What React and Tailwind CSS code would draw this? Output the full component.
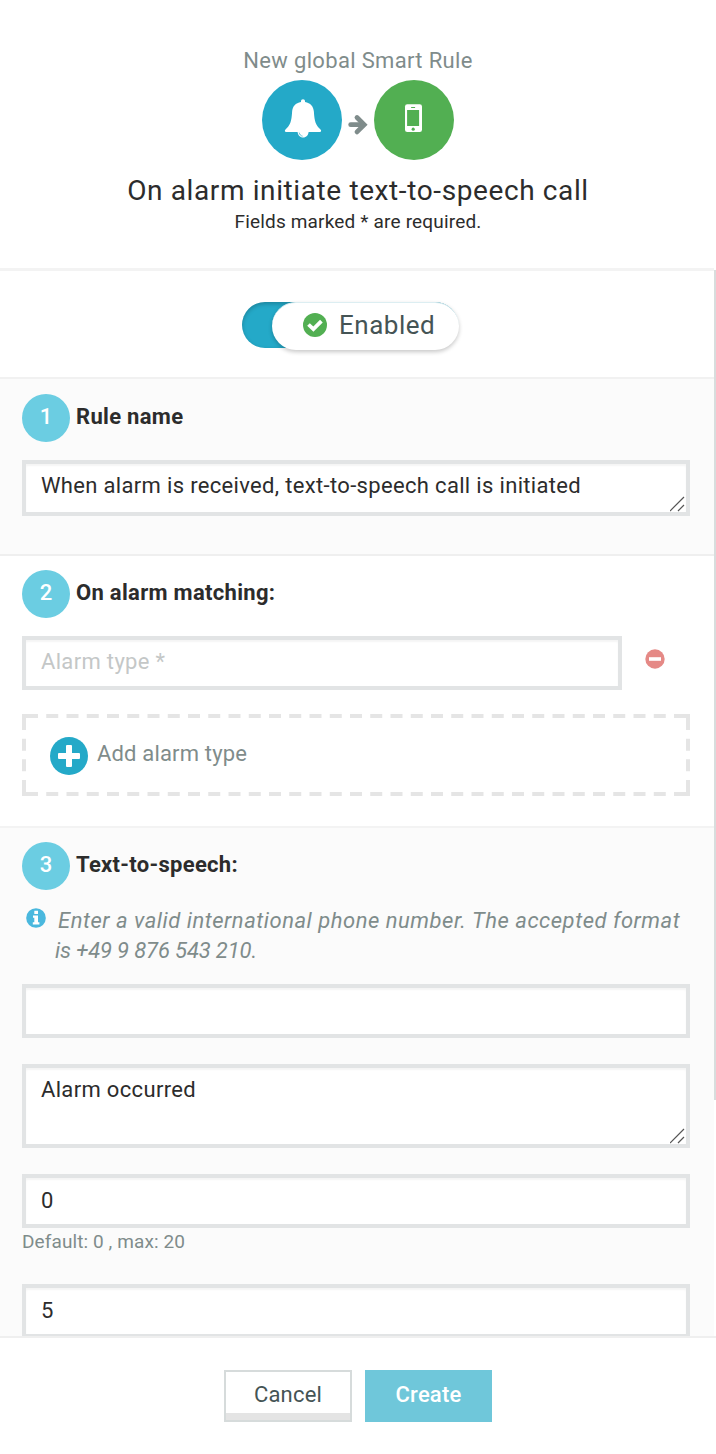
const FIELD =
  "block w-full rounded-none border-4 border-[#e2e4e5] bg-white pl-[15px] pr-4 text-[22px] leading-[30px] tracking-[0.33px] text-[#2c2c2c] shadow-[inset_0_2px_2px_rgba(0,0,0,0.045)] outline-none placeholder:text-[#c4c7c7]";

function Bell() {
  return (
    <svg viewBox="0 0 80 80" className="size-20 rounded-full bg-[#24a9c8]">
      <path
        fill="#fff"
        d="M41 19.200c1.200 0 2 .8 2 1.900v.8c5.400 1 8.600 4.400 8.900 9.900.5 9.600 2 13.700 6.400 17.400 1.400 1.200 1 2.900-.6 2.900H24.300c-1.600 0-2-1.700-.6-2.900 4.400-3.700 5.900-7.800 6.400-17.400.3-5.500 3.500-8.900 8.900-9.900v-.8c0-1.100.8-1.900 2-1.900Z"
      />
      <path d="M35.600 51.500h11c0 3.400-2.300 6-5.500 6s-5.500-2.600-5.500-6Z" fill="#fff" />
      <path d="M37.200 52.600c.3 1.800 1.500 3.200 3.400 3.600" fill="none" stroke="#24a9c8" strokeWidth="0.700" />
    </svg>
  );
}

function Phone() {
  return (
    <svg viewBox="0 0 80 80" className="size-20 rounded-full bg-[#52af52]">
      <rect x="31" y="24.300" width="17" height="27.700" rx="2.300" fill="#fff" />
      <rect x="33.100" y="30" width="12" height="16" fill="#52af52" />
      <rect x="37" y="27" width="4.200" height="1" rx="0.500" fill="#52af52" />
      <circle cx="39.200" cy="49.200" r="1.600" fill="#52af52" />
    </svg>
  );
}

function Arrow() {
  return (
    <svg viewBox="0 0 32 80" className="h-20 w-8" fill="none" stroke="#7f8c8b" strokeWidth="4.800">
      <path d="M8.700 44.700H20" strokeLinecap="round" />
      <path d="M15 37.500l7.200 7.200-7.200 7.200" strokeLinecap="round" />
    </svg>
  );
}

function Grip() {
  return (
    <svg viewBox="0 0 16 16" className="absolute bottom-1 right-1 size-4" stroke="#555" strokeWidth="1.200">
      <path d="M0 15L14 1M8 15l6-6" />
    </svg>
  );
}

function StepTitle({ n, children }) {
  return (
    <div className="flex h-12 gap-[6px]">
      <span className="h-12 w-12 rounded-full bg-[#6bcde2] pt-2 text-center text-[22px] font-medium leading-[30px] text-white">
        {n}
      </span>
      <h2 className="pt-2 text-[22px] font-bold leading-[30px] tracking-[0.3px] text-[#2c2c2c]">{children}</h2>
    </div>
  );
}

function AddRow() {
  return (
    <button className="relative flex h-[82px] w-full items-start pl-7 pt-[23px] text-left">
      <svg className="absolute inset-0 h-full w-full" viewBox="0 0 668 82" stroke="#e5e5e5" strokeWidth="4" fill="none">
        <path d="M4 2H664M4 80H664" strokeDasharray="12 8.250" />
        <path d="M2 0V82M666 0V82" strokeDasharray="16 8.670 12 8.670 12 8.670 16 8" />
        <path d="M0 2H4M664 2h4M0 80H4M664 80h4" />
      </svg>
      <svg viewBox="0 0 38 38" className="mr-[9px] size-[38px]">
        <circle cx="19" cy="19" r="19" fill="#24a9c8" />
        <rect x="8" y="16" width="22" height="6" rx="1" fill="#fff" />
        <rect x="16" y="8" width="6" height="22" rx="1" fill="#fff" />
      </svg>
      <span className="mt-[2px] text-[22px] leading-[30px] tracking-[0.17px] text-[#7f8c8b]">Add alarm type</span>
    </button>
  );
}

export default function App() {
  return (
    <div className="flex h-[1454px] w-[716px] flex-col overflow-hidden bg-white font-['Roboto',sans-serif] text-[#2c2c2c]">
      <header className="flex h-[268px] shrink-0 flex-col items-center pt-[46px]">
        <p className="h-[34px] text-[22px] leading-[30px] tracking-[0.33px] text-[#7f8c8b]">New global Smart Rule</p>
        <div className="flex">
          <Bell />
          <Arrow />
          <Phone />
        </div>
        <h1 className="mt-[11px] text-[28px] leading-10 tracking-[0.61px]">On alarm initiate text-to-speech call</h1>
        <p className="-mt-px text-[19px] leading-6 tracking-[0.17px]">Fields marked * are required.</p>
      </header>

      <main className="flex h-[1068px] shrink-0 overflow-hidden">
        <div className="w-[714px] shrink-0">
          <section className="h-[109px] border-t-[3px] border-[#f3f3f3] pl-[242px] pt-[31px]">
            <div className="h-[46px] w-[216px] rounded-full bg-[#24a9c8] pl-[30px] shadow-[inset_0_2px_4px_rgba(0,0,0,0.22)]">
              <div className="flex h-12 w-[187px] items-center rounded-full border-t border-[#dceef2] bg-white pb-[3px] pl-[31px] shadow-[0_2px_4px_rgba(0,0,0,0.22)]">
                <svg viewBox="0 0 24 24" className="mr-3 size-6">
                  <circle cx="12" cy="12" r="12" fill="#52af52" />
                  <path d="M5.500 11.500l4.900 4.700 8-8" fill="none" stroke="#fff" strokeWidth="3.800" />
                </svg>
                <span className="text-[26px] leading-[34px] tracking-[0.5px] text-[#455455]">Enabled</span>
              </div>
            </div>
          </section>

          <section className="h-[177px] border-t-2 border-[#f1f1f1] bg-[#fbfbfb] pl-[22px] pr-6 pt-[15px]">
            <StepTitle n="1">Rule name</StepTitle>
            <div className="relative mt-[18px]">
              <textarea
                className={FIELD + " h-14 resize-none overflow-hidden pt-[7px]"}
                defaultValue="When alarm is received, text-to-speech call is initiated"
              />
              <Grip />
            </div>
          </section>

          <section className="h-[272px] border-t-2 border-[#efefef] bg-white pl-[22px] pr-6 pt-[14px]">
            <StepTitle n="2">On alarm matching:</StepTitle>
            <div className="mt-[18px] flex">
              <div className="w-[600px]">
                <input className={FIELD + " h-[54px] pb-1"} placeholder="Alarm type *" />
              </div>
              <svg viewBox="0 0 20 20" className="ml-[23px] mt-[13px] size-5">
                <circle cx="10" cy="10" r="9.700" fill="#e58986" />
                <path d="M4 10h12" stroke="#fff" strokeWidth="3.600" />
              </svg>
            </div>
            <div className="mt-6">
              <AddRow />
            </div>
          </section>

          <section className="h-[600px] border-t-2 border-[#f3f3f3] bg-[#fbfbfb] pl-[22px] pr-6 pt-[14px]">
            <StepTitle n="3">Text-to-speech:</StepTitle>
            <div className="mt-4 flex pl-1 text-[22px] italic leading-[30px] text-[#7f8c8b]">
              <svg viewBox="0 0 20 20" className="mr-[9px] mt-[2px] size-5 shrink-0">
                <circle cx="10" cy="10" r="9.800" fill="#4ab8de" />
                <path d="M8.300 2.800h3.700v3.100H8.300zM7 7.500h5v6.700h1.400v2.200H6.800v-2.200h1.500V9.700H7z" fill="#fff" />
              </svg>
              <p className="whitespace-nowrap">
                <span className="block pl-[3px] tracking-[0.52px]">
                  Enter a valid international phone number. The accepted format
                </span>
                <span className="block tracking-[-0.14px]">is +49 9 876 543 210.</span>
              </p>
            </div>
            <input className={FIELD + " mt-[18px] h-[54px]"} />
            <div className="relative mt-[26px]">
              <textarea className={FIELD + " h-[84px] resize-none overflow-hidden pt-[7px]"} defaultValue="Alarm occurred" />
              <Grip />
            </div>
            <input className={FIELD + " mt-[26px] h-[54px] pb-px"} defaultValue="0" />
            <p className="mb-[30px] mt-[2px] text-[19px] leading-6 tracking-[0.1px] text-[#7f8c8b]">Default: 0 , max: 20</p>
            <input className={FIELD + " h-[54px] pb-px"} defaultValue="5" />
          </section>
        </div>
        <div className="mt-[2px] h-[830px] w-[2px] bg-[#d8dddd]" />
      </main>

      <footer className="flex h-[118px] shrink-0 justify-center gap-[13px] border-t-2 border-[#efefef] pt-8">
        <button className="h-[52px] w-32 border-2 border-[#d6dbdb] bg-white pb-[3px] text-[22px] leading-[30px] tracking-[0.2px] text-[#455455] shadow-[inset_0_-7px_0_#e4e4e4]">
          Cancel
        </button>
        <button className="h-[52px] w-[127px] bg-[#6fc7da] pb-[3px] text-[22px] font-medium leading-[30px] tracking-[0.2px] text-white">
          Create
        </button>
      </footer>
    </div>
  );
}
